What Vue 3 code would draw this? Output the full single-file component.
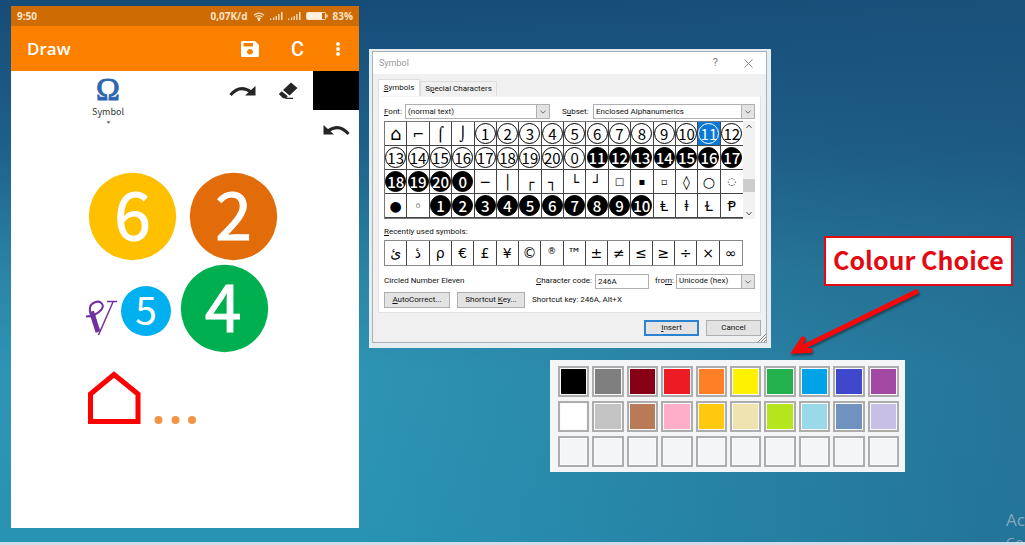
<script setup>
import { ref } from 'vue'

const white = (from, to) => Array.from({ length: to - from + 1 }, (_, i) => ({ t: String(from + i), kind: 'ring' }))
const black = (from, to) => Array.from({ length: to - from + 1 }, (_, i) => ({ t: String(from + i), kind: 'disc' }))
const plain = (s) => s.split(' ').map((t) => ({ t, kind: '▪▫□◌'.includes(t) ? 'small' : 'plain' }))

const symbols = [
  ...plain('⌂ ⌐ ⌠ ⌡'), ...white(1, 12),
  ...white(13, 20), { t: '0', kind: 'ring' }, ...black(11, 17),
  ...black(18, 20), { t: '0', kind: 'disc' }, ...plain('─ │ ┌ ┐ └ ┘ □ ▪ ▫ ◊ ○ ◌'),
  ...plain('● ◦'), ...black(1, 10), ...plain('Ⱡ ⱡ Ɫ Ᵽ'),
]
const recent = 'ئ دٔ ρ € £ ¥ © ® ™ ± ≠ ≤ ≥ ÷ × ∞'.split(' ')
const selected = ref(14)
const code = ref('246A')

const colours = [
  ['black', '#000000'], ['gray', '#7f7f7f'], ['maroon', '#880015'], ['red', '#ed1c24'], ['orange', '#ff7f27'],
  ['yellow', '#fff200'], ['green', '#22b14c'], ['blue', '#00a2e8'], ['indigo', '#3f48cc'], ['purple', '#a349a4'],
  ['white', '#ffffff'], ['silver', '#c3c3c3'], ['brown', '#b97a57'], ['pink', '#ffaec9'], ['gold', '#ffc90e'],
  ['cream', '#efe4b0'], ['lime', '#b5e61d'], ['sky', '#99d9ea'], ['steel', '#7092be'], ['lavender', '#c8bfe7'],
  ...Array.from({ length: 10 }, (_, i) => ['custom ' + (i + 1), '#f4f5f7']),
]
</script>

<template>
  <main class="desktop">
    <section class="phone">
      <div class="status">
        <span>9:50</span>
        <div class="status-right">
          <span>0,07K/d</span>
          <svg width="12" height="9" viewBox="0 0 12 9" fill="none" stroke="#fbe3c8" stroke-width="1.3">
            <path d="M1 3.2Q6-.8 11 3.2M2.6 5Q6 2.2 9.4 5M4.3 6.7Q6 5.2 7.7 6.7" /><circle cx="6" cy="8" r=".6" />
          </svg>
          <svg v-for="n in 2" :key="n" width="13" height="8" viewBox="0 0 13 8" fill="#fbe3c8">
            <path d="M0 6.500h1.300V8H0zM3 5.500h1.300V8H3zM5.600 4h1.300v4H5.600zM8.200 2h1.300v6H8.200zM11 0h1.500v8H11z" />
          </svg>
          <svg width="22" height="8" viewBox="0 0 22 8">
            <rect x=".5" y=".5" width="19" height="7" rx="1" fill="none" stroke="#fbe3c8" /><rect x="1" y="1" width="15" height="6" fill="#fff0df" /><path d="M20 2.5h1.5v3H20" fill="#fbe3c8" />
          </svg>
          <span>83%</span>
        </div>
      </div>
      <header class="appbar">
        <h1>Draw</h1>
        <button aria-label="Save">
          <svg width="18" height="16" viewBox="0 0 18 16"><path fill="#fff" fill-rule="evenodd" d="M1.5 0H14l4 4v10.500a1.500 1.500 0 0 1-1.500 1.500h-15A1.500 1.500 0 0 1 0 14.500v-13A1.500 1.500 0 0 1 1.500 0zM2.500 2v3.500H12V2zM9 8a3 2.800 0 1 0 .01 0z" /></svg>
        </button>
        <button class="clear">C</button>
        <button aria-label="More">
          <svg width="4" height="14" viewBox="0 0 4 14" fill="#fff"><circle cx="2" cy="2" r="1.900" /><circle cx="2" cy="7" r="1.900" /><circle cx="2" cy="12" r="1.900" /></svg>
        </button>
      </header>
      <div class="tools">
        <button class="omega"><span class="glyph">Ω</span><span>Symbol</span>
          <svg width="5" height="3" viewBox="0 0 5 3"><path d="M.5.500h4L2.500 2.500z" fill="#444" /></svg>
        </button>
        <button class="redo" aria-label="Redo">
          <svg width="27" height="12" viewBox="0 0 27 12"><path d="M1.500 10Q11-1 22 7" fill="none" stroke="#252525" stroke-width="3" /><path d="M26.500 1v9.500H16z" fill="#252525" /></svg>
        </button>
        <button class="eraser" aria-label="Eraser">
          <svg width="20" height="18" viewBox="0 0 20 18" fill="#252525"><path d="M13 .500 19.500 6 11.500 13.500 5 8zM3.800 9.200l6 5-2 2H5L.800 12zM8 15.800h7V17H7z" /></svg>
        </button>
        <div class="ink">
          <button class="current" aria-label="Current colour"></button>
          <button class="undo" aria-label="Undo">
            <svg width="27" height="12" viewBox="0 0 27 12"><path d="M25.500 10Q16-1 5 7" fill="none" stroke="#252525" stroke-width="3" /><path d="M.500 1v9.500H11z" fill="#252525" /></svg>
          </button>
        </div>
      </div>
      <svg class="drawing" width="348" height="390" viewBox="0 0 348 390">
        <g class="digits">
          <circle cx="121.500" cy="78.500" r="43.700" fill="#ffc000" /><text x="121.500" y="102" font-size="66">6</text>
          <circle cx="222.500" cy="78.500" r="43.700" fill="#e36c0a" /><text x="222.500" y="102" font-size="66">2</text>
          <circle cx="135" cy="173" r="25" fill="#00b0f0" /><text class="thin" x="135" y="187" font-size="39">5</text>
          <circle cx="213.500" cy="170.500" r="43.700" fill="#00b050" /><text x="212" y="194" font-size="66">4</text>
        </g>
        <g fill="none" stroke="#7030a0" stroke-linejoin="bevel">
          <path d="M75 178.500c6 0 12-3 15.500-7 3.500-5-1-9-6-7.500-6 2-7 7-4.500 12" stroke-width="2" />
          <path d="M80.500 173.500 87 194" stroke-width="5" />
          <path d="M87.500 197 102 164M96 163.500h10" stroke-width="1.500" />
        </g>
        <path d="M79.500 283.500V256l23.500-19.500 24 19.500v27.500z" fill="none" stroke="#f00" stroke-width="5" />
        <g fill="#f09545"><circle cx="147.500" cy="282" r="4" /><circle cx="164.500" cy="282" r="4" /><circle cx="181" cy="282" r="4" /></g>
      </svg>
    </section>

    <section class="frame">
      <div class="dialog">
        <header class="title">
          <span>Symbol</span>
          <button aria-label="Help">?</button>
          <button aria-label="Close"><svg width="9" height="9" viewBox="0 0 9 9"><path d="m.500.500 8 8m0-8-8 8" stroke="#888" /></svg></button>
        </header>
        <div class="content">
          <nav class="tabs">
            <button class="on"><u>S</u>ymbols</button>
            <button class="special">S<u>p</u>ecial Characters</button>
          </nav>
          <div class="panel">
            <div class="row pick">
              <label class="l-font" for="font"><u>F</u>ont:</label>
              <div class="combo font"><select id="font"><option>(normal text)</option></select>
                <svg viewBox="0 0 14 14"><path d="m4 6 3 3 3-3" /></svg></div>
              <label class="l-subset" for="subset">S<u>u</u>bset:</label>
              <div class="combo subset"><select id="subset"><option>Enclosed Alphanumerics</option></select>
                <svg viewBox="0 0 14 14"><path d="m4 6 3 3 3-3" /></svg></div>
            </div>
            <div class="gridwrap">
              <div class="symbols">
                <button v-for="(s, i) in symbols" :key="i" :class="{ sel: i === selected }" @click="selected = i"><span :class="s.kind">{{ s.t }}</span></button>
              </div>
              <div class="scroll">
                <svg viewBox="0 0 12 12"><path d="m3.500 7 2.500-3 2.500 3" /></svg>
                <i></i>
                <svg viewBox="0 0 12 12"><path d="m3.500 5 2.500 3 2.500-3" /></svg>
              </div>
            </div>
            <p class="caption"><u>R</u>ecently used symbols:</p>
            <div class="recent">
              <button v-for="r in recent" :key="r" :class="{ sup: r === '®' }">{{ r }}</button>
            </div>
            <div class="row info">
              <span class="name">Circled Number Eleven</span>
              <label for="code"><u>C</u>haracter code:</label>
              <input id="code" v-model="code" />
              <label class="l-from" for="from">fro<u>m</u>:</label>
              <div class="combo from"><select id="from"><option>Unicode (hex)</option></select>
                <svg viewBox="0 0 14 14"><path d="m4 6 3 3 3-3" /></svg></div>
            </div>
            <div class="row keys">
              <button class="btn auto"><u>A</u>utoCorrect...</button>
              <button class="btn short">Shortcut <u>K</u>ey...</button>
              <span>Shortcut key: 246A, Alt+X</span>
            </div>
          </div>
          <footer>
            <button class="btn insert"><u>I</u>nsert</button>
            <button class="btn">Cancel</button>
          </footer>
        </div>
        <svg class="grip" width="8" height="8" viewBox="0 0 8 8"><path d="M0 8 8 0M3 8l5-5M6 8l2-2" stroke="#888" /></svg>
      </div>
    </section>

    <section class="palette">
      <button v-for="[name, c] in colours" :key="name" :aria-label="name"><i :style="{ background: c }"></i></button>
    </section>

    <div class="callout">Colour Choice</div>
    <svg class="arrow" width="136" height="76" viewBox="0 0 136 76" fill="none" stroke="#f50808" stroke-width="5">
      <path d="M129 6 8 65" /><path d="M14 54 6 66l15-.500" stroke-linecap="round" />
    </svg>
    <div class="activate"><span>Ac</span><small>Go</small></div>
    <div class="taskbar"></div>
  </main>
</template>

<style>
body { margin: 0; overflow: hidden; }
</style>

<style scoped>
.desktop {
  position: relative;
  height: 100vh;
  overflow: hidden;
  background:
    linear-gradient(90deg, rgba(28, 85, 125, 0) 35%, rgba(28, 85, 125, 0.5) 100%),
    linear-gradient(180deg, #164c78 0%, #1e608a 27%, #2b84a5 50%, #2e94b4 68%, #2993b4 100%);
  font-family: "Open Sans", "Noto Sans", sans-serif;
}
button, input, select { font: inherit; color: inherit; margin: 0; padding: 0; border: 0; background: none; }
* { box-sizing: border-box; }
svg { display: block; flex: none; }
u { text-underline-offset: 1px; text-decoration-thickness: 1px; }

.phone { position: absolute; left: 11px; top: 6px; width: 348px; height: 522px; background: #fff; font-family: Roboto, sans-serif; }
.status { height: 20px; padding: 0 6px; display: flex; justify-content: space-between; align-items: center; background: #cf6b03; color: #fbe3c8; font: 700 10px "Open Sans", sans-serif; }
.status-right { display: flex; align-items: center; gap: 5px; }
.appbar { height: 45px; padding: 0 19px 0 16px; display: flex; align-items: center; gap: 32px; background: #fc8000; color: #fff; }
.appbar h1 { flex: 1; margin: 0; font: 600 17px "Open Sans", sans-serif; }
.clear { font-size: 20px; font-weight: 500; }
.tools { display: flex; height: 67px; align-items: flex-start; }
.omega { width: 50px; margin: 4px 122px 0 72px; display: flex; flex-direction: column; align-items: center; font: 9px/14px "Noto Sans CJK SC", sans-serif; color: #333; gap: 2px; }
.glyph { font: 32px/28px "Liberation Serif", serif; color: #2f66b0; -webkit-text-stroke: 1px #2f66b0; }
.redo { margin: 14px 22px 0 -26px; }
.eraser { margin: 11px 0 0; }
.ink { margin-left: auto; display: flex; flex-direction: column; align-items: center; gap: 14px; }
.current { width: 46px; height: 39px; background: #000; }
.digits text { fill: #fff; stroke: #fff; stroke-width: 1px; text-anchor: middle; font-family: "Noto Sans CJK SC", sans-serif; }
.digits .thin { stroke: none; }

.frame { position: absolute; left: 369px; top: 49px; width: 402px; padding: 2px 4px 5px 3px; background: #e6edf2; }
.dialog { position: relative; border: 1px solid #a9b0b5; background: #f0f0f0; font: 8px/12px Roboto, sans-serif; color: #111; white-space: nowrap; }
.title { height: 22px; padding: 0 13px 0 6px; display: flex; align-items: center; background: #fff; color: #999; }
.title span { flex: 1; font-size: 9px; }
.title button + button { margin-left: 26px; }
.title button { font-size: 11px; color: #777; }
.content { padding: 5px 5px 6px 5px; }
.tabs { display: flex; align-items: flex-end; }
.tabs button { height: 15px; width: 42px; border: 1px solid #ddd; border-bottom: 0; }
.tabs .special { width: 77px; }
.tabs .on { height: 17px; background: #fff; }
.panel { padding: 7px 5px 4px 5px; border: 1px solid #e2e2e2; border-top-color: #f6f6f6; background: #fff; }
.row { display: flex; align-items: center; }
.pick { height: 15px; }
.l-font { width: 21px; }
.l-subset { width: 31px; }
.l-from { width: 21px; }
.combo { display: grid; grid-template-columns: 1fr 13px; height: 15px; border: 1px solid #b0b0b0; background: #fff; }
.combo select { min-width: 0; padding-left: 2px; appearance: none; }
.combo svg { width: 13px; height: 13px; background: #e3e3e3; border-left: 1px solid #b0b0b0; }
.combo path, .scroll path { fill: none; stroke: #555; }
.font { width: 145px; margin-right: 12px; }
.subset { flex: 1; }
.gridwrap { display: flex; margin-top: 2px; }
.symbols { flex: 1; display: grid; grid-template-columns: repeat(16, minmax(0, 1fr)); grid-auto-rows: 24px; border: 1px solid #777; border-right: 0; }
.symbols button, .recent button { display: grid; place-items: center; color: #000; font: 14px/16px "DejaVu Sans", sans-serif; border-right: 1px solid #444; border-bottom: 1px solid #444; }
.symbols button:nth-child(16n) { border-right: 0; }
.symbols button:first-child .plain { font-size: 18px; }
.symbols .small { font-size: 10px; }
.ring, .disc { width: 21px; height: 21px; display: grid; place-items: center; border: 1px solid #000; border-radius: 50%; font: 15px/19px "Noto Sans CJK SC", sans-serif; }
.disc { background: #000; color: #fff; font-weight: 500; }
.symbols .sel { background: #0a78d7; }
.sel .ring { color: #fff; border-color: #fff; }
.scroll { width: 12px; display: flex; flex-direction: column; justify-content: space-between; background: #f2f2f2; }
.scroll svg { width: 12px; height: 12px; }
.scroll i { height: 13px; margin-top: 30px; background: #cdcdcd; }
.caption { margin: 7px 0 2px; }
.recent { display: grid; grid-template-columns: repeat(16, minmax(0, 1fr)); height: 26px; margin-right: 12px; border: 1px solid #888; }
.recent button { border-bottom: 0; }
.recent button:last-child { border-right: 0; }
.recent .sup { font-size: 9px; padding-bottom: 5px; }
.info { height: 16px; margin-top: 7px; }
.name { flex: 1; }
.info input { width: 54px; height: 15px; padding: 0 2px; margin: 0 6px 0 3px; border: 1px solid #b0b0b0; }
.from { width: 79px; }
.keys { margin-top: 3px; gap: 7px; }
.btn { height: 16px; min-width: 55px; border: 1px solid #adadad; background: #e3e3e3; }
.auto { width: 66px; }
.short { width: 68px; }
footer { display: flex; justify-content: flex-end; gap: 7px; margin-top: 7px; }
.insert { border: 2px solid #2a82d0; }
.grip { position: absolute; right: 0; bottom: 0; }

.palette { position: absolute; left: 550px; top: 360px; width: 355px; padding: 6px 6px 5px 8px; display: grid; grid-template-columns: repeat(10, 1fr); grid-auto-rows: 31px; gap: 4px 3px; background: #f4f5f7; }
.palette button { padding: 1px; border: 2px solid #adadad; display: grid; background: #fafafa; }

.callout { position: absolute; left: 824px; top: 236px; padding: 2px 7px 6px; border: 2px solid #e30b13; background: #fff; color: #e30b13; font: 700 25px/38px "Noto Sans CJK SC", sans-serif; white-space: nowrap; }
.arrow { position: absolute; left: 789px; top: 285px; filter: drop-shadow(1px 2px 1px rgba(0, 0, 0, 0.4)); }
.activate { position: absolute; left: 1006px; top: 509px; display: flex; flex-direction: column; color: #83a9bd; font-size: 17px; line-height: 22px; }
.activate small { font-size: 13px; line-height: 22px; }
.taskbar { position: absolute; left: 0; right: 0; bottom: 0; height: 3px; background: #d3dbe6; }
</style>
